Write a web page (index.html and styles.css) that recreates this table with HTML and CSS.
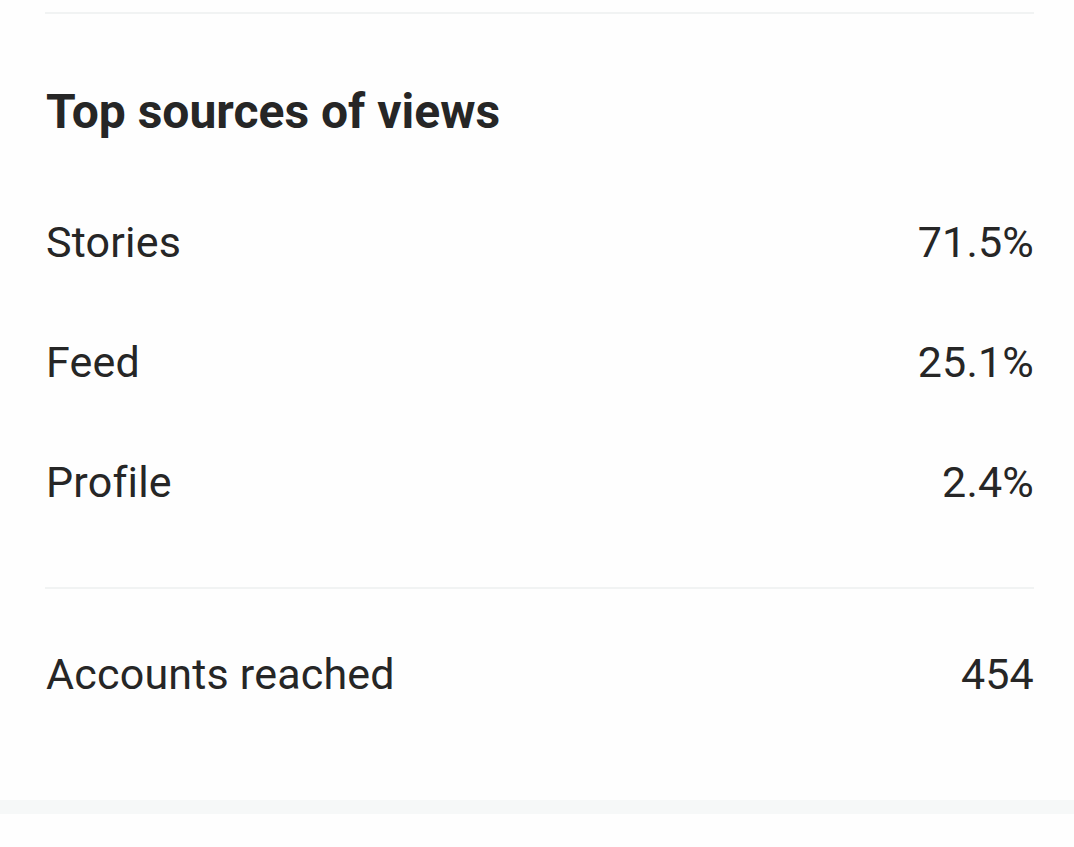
FILE: index.html
```html
<!DOCTYPE html>
<html lang="en">
<head>
<meta charset="utf-8">
<link rel="stylesheet" href="styles.css">
</head>
<body>
<div class="page">
  <section class="card">
    <div class="divider top"></div>
    <h2 class="title">Top sources of views</h2>
    <ul class="list">
      <li class="row"><span>Stories</span><span>71.5%</span></li>
      <li class="row"><span>Feed</span><span>25.1%</span></li>
      <li class="row"><span>Profile</span><span>2.4%</span></li>
    </ul>
    <div class="divider mid"></div>
    <div class="row summary"><span>Accounts reached</span><span>454</span></div>
  </section>
  <div class="band"></div>
</div>
</body>
</html>
```
FILE: styles.css
```css
html, body {
  margin: 0;
  padding: 0;
  background: #fefefe;
}
.page {
  font-family: Roboto, "Liberation Sans", sans-serif;
  color: #262626;
  width: 1074px;
  height: 847px;
  display: flex;
  flex-direction: column;
}
.card {
  padding: 12px 40px 0 46px;
  display: flex;
  flex-direction: column;
  height: 800px;
  box-sizing: border-box;
  flex-shrink: 0;
}
.divider {
  height: 2px;
  background: #f1f3f3;
  margin-left: -1px;
}
.title {
  margin: 0;
  font-size: 48px;
  font-weight: 700;
  line-height: 54px;
  padding-top: 71px;
  letter-spacing: 0;
}
.list {
  list-style: none;
  margin: 0;
  padding: 79px 0 0 0;
}
.row {
  display: flex;
  justify-content: space-between;
  font-size: 43px;
  line-height: 48px;
  height: 120px;
  align-items: flex-start;
  letter-spacing: 0.2px;
}
.mid {
  margin-top: 9px;
}
.summary {
  margin-top: 61px;
}
.band {
  height: 14px;
  background: #f6f8f8;
  flex-shrink: 0;
}
```
